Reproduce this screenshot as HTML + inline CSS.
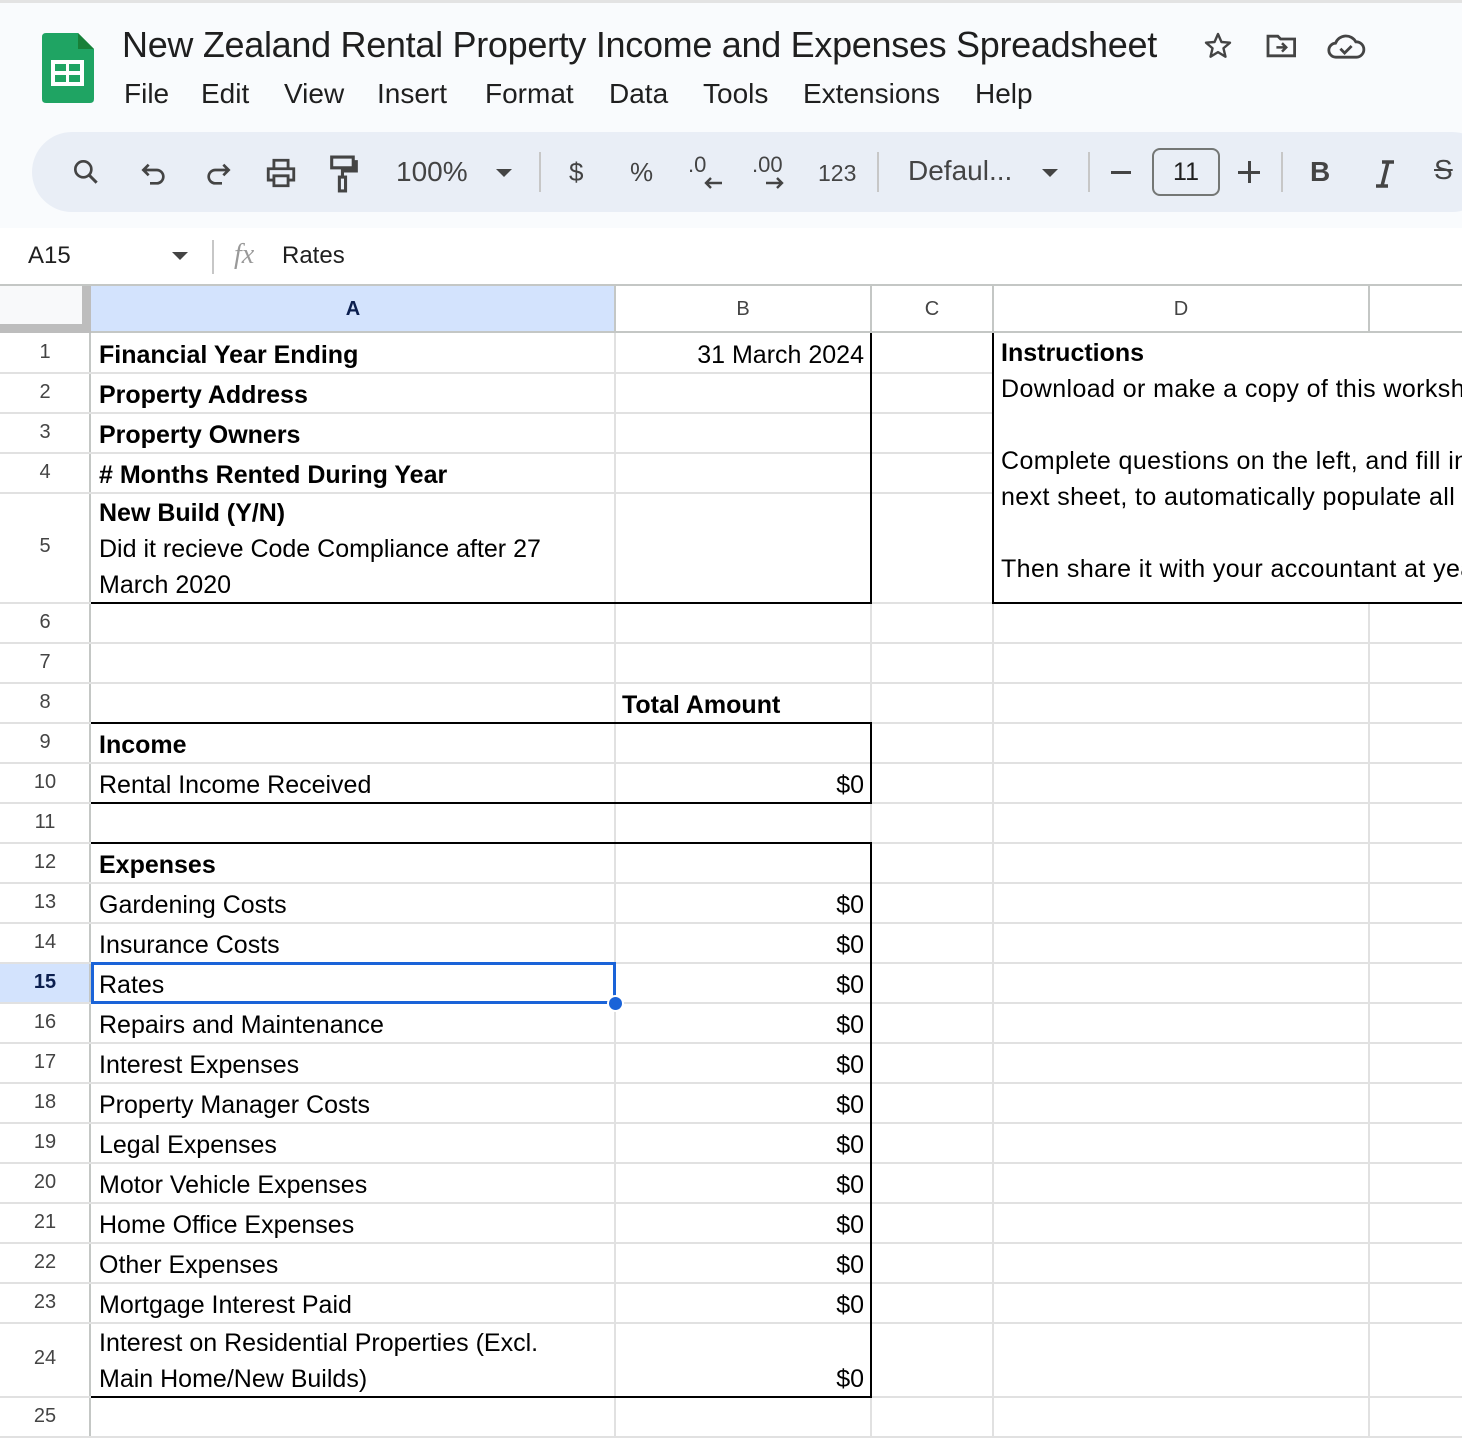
<!DOCTYPE html>
<html><head><meta charset="utf-8"><style>
*{margin:0;padding:0;box-sizing:border-box}
body{width:1462px;height:1438px;overflow:hidden;background:#fff;font-family:"Liberation Sans",sans-serif;position:relative;color:#000}
.a{position:absolute}
.t{position:absolute;font-size:25px;line-height:30px;white-space:nowrap}
.b{font-weight:bold}
.rn{position:absolute;left:0;width:90px;text-align:center;font-size:20px;color:#444}
.h{position:absolute;height:2px;background:#e1e1e1}
.v{position:absolute;width:2px;background:#e1e1e1}
.k{position:absolute;background:#000}
.m{position:absolute;top:77px;font-size:28px;line-height:34px;color:#1f1f1f;white-space:nowrap}
.ic{position:absolute;top:152px}
</style></head><body>
<div class="a" style="left:0;top:0;width:1462px;height:228px;background:#f9fbfd"></div>
<div class="a" style="left:0;top:0;width:1462px;height:3px;background:#e3e3e3"></div>
<svg class="a" style="left:42px;top:33px" width="52" height="70" viewBox="0 0 52 70">
<path d="M4 0H36L52 16V66Q52 70 48 70H4Q0 70 0 66V4Q0 0 4 0Z" fill="#1fa463"/>
<path d="M36 0V16H52Z" fill="#188038"/>
<rect x="9" y="27" width="33" height="26" fill="#fff"/>
<rect x="13" y="31" width="11" height="7" fill="#1fa463"/><rect x="27" y="31" width="11" height="7" fill="#1fa463"/>
<rect x="13" y="42" width="11" height="7" fill="#1fa463"/><rect x="27" y="42" width="11" height="7" fill="#1fa463"/>
</svg>
<div class="t" style="left:122px;top:24px;font-size:36px;line-height:42px;color:#1f1f1f;letter-spacing:-0.3px">New Zealand Rental Property Income and Expenses Spreadsheet</div>
<svg class="a" style="left:1202px;top:30px" width="32" height="32" viewBox="0 0 24 24"><path d="M12 3l2.6 6 6.4.5-4.9 4.2 1.5 6.3L12 16.6 6.4 20l1.5-6.3L3 9.5l6.4-.5z" fill="none" stroke="#444" stroke-width="1.8" stroke-linejoin="round"/></svg>
<svg class="a" style="left:1265px;top:32px" width="34" height="28" viewBox="0 0 24 20"><path d="M2 3h7l2 2h10v12H2z" fill="none" stroke="#444" stroke-width="2"/><path d="M8 11h7M12 8l3 3-3 3" fill="none" stroke="#444" stroke-width="1.8"/></svg>
<svg class="a" style="left:1326px;top:32px" width="40" height="28" viewBox="0 0 28 20"><path d="M7 18a5 5 0 0 1-.5-10A8 8 0 0 1 21 7a5.5 5.5 0 0 1 .5 11z" fill="none" stroke="#444" stroke-width="2"/><path d="M10 12l3 3 5-5" fill="none" stroke="#444" stroke-width="2"/></svg>
<div class="m" style="left:124px">File</div>
<div class="m" style="left:201px">Edit</div>
<div class="m" style="left:284px">View</div>
<div class="m" style="left:377px">Insert</div>
<div class="m" style="left:485px">Format</div>
<div class="m" style="left:609px">Data</div>
<div class="m" style="left:703px">Tools</div>
<div class="m" style="left:803px">Extensions</div>
<div class="m" style="left:975px">Help</div>
<div class="a" style="left:32px;top:132px;width:1460px;height:80px;background:#e9eef6;border-radius:40px"></div>
<svg class="ic" style="left:70px;top:156px" width="32" height="32" viewBox="0 0 24 24"><circle cx="10" cy="10" r="6" fill="none" stroke="#444" stroke-width="2"/><path d="M14.5 14.5L20 20" stroke="#444" stroke-width="2.2"/></svg>
<svg class="ic" style="left:138px;top:158px" width="32" height="32" viewBox="0 0 24 24"><path d="M8 5L4 9l4 4M4 9h10a5 5 0 0 1 0 10H9" fill="none" stroke="#444" stroke-width="2"/></svg>
<svg class="ic" style="left:202px;top:158px" width="32" height="32" viewBox="0 0 24 24"><path d="M16 5l4 4-4 4M20 9H10a5 5 0 0 0 0 10h5" fill="none" stroke="#444" stroke-width="2"/></svg>
<svg class="ic" style="left:264px;top:156px" width="34" height="34" viewBox="0 0 24 24"><path d="M7 8V3h10v5M7 17H3V9h18v8h-4M7 14h10v7H7z" fill="none" stroke="#444" stroke-width="2"/></svg>
<svg class="ic" style="left:328px;top:154px" width="32" height="40" viewBox="0 0 20 26"><path d="M2 2h14v7H2zM16 5h2v6H9v4" fill="none" stroke="#444" stroke-width="2"/><rect x="7" y="15" width="4" height="9" fill="none" stroke="#444" stroke-width="2"/></svg>
<div class="t" style="left:396px;top:157px;font-size:28px;color:#444">100%</div>
<div class="a" style="left:496px;top:169px;border:8px solid transparent;border-top:8px solid #444;border-bottom:0"></div>
<div class="a" style="left:539px;top:152px;width:2px;height:40px;background:#c7c7c7"></div>
<div class="t" style="left:569px;top:157px;font-size:26px;color:#444">$</div>
<div class="t" style="left:630px;top:157px;font-size:26px;color:#444">%</div>
<div class="t" style="left:688px;top:150px;font-size:22px;color:#444">.0</div>
<svg class="a" style="left:702px;top:176px" width="22" height="14" viewBox="0 0 22 14"><path d="M20 7H4M9 2L4 7l5 5" fill="none" stroke="#444" stroke-width="2.4"/></svg>
<div class="t" style="left:752px;top:150px;font-size:22px;color:#444">.00</div>
<svg class="a" style="left:764px;top:176px" width="22" height="14" viewBox="0 0 22 14"><path d="M2 7h16M13 2l5 5-5 5" fill="none" stroke="#444" stroke-width="2.4"/></svg>
<div class="t" style="left:818px;top:158px;font-size:23px;color:#444">123</div>
<div class="a" style="left:877px;top:152px;width:2px;height:40px;background:#c7c7c7"></div>
<div class="t" style="left:908px;top:156px;font-size:28px;color:#444">Defaul...</div>
<div class="a" style="left:1042px;top:169px;border:8px solid transparent;border-top:8px solid #444;border-bottom:0"></div>
<div class="a" style="left:1088px;top:152px;width:2px;height:40px;background:#c7c7c7"></div>
<div class="a" style="left:1111px;top:171px;width:20px;height:3px;background:#444"></div>
<div class="a" style="left:1152px;top:148px;width:68px;height:48px;border:2px solid #747775;border-radius:8px;font-size:25px;line-height:44px;text-align:center;color:#1f1f1f">11</div>
<div class="a" style="left:1238px;top:171px;width:22px;height:3px;background:#444"></div>
<div class="a" style="left:1248px;top:161px;width:3px;height:22px;background:#444"></div>
<div class="a" style="left:1281px;top:152px;width:2px;height:40px;background:#c7c7c7"></div>
<div class="t b" style="left:1310px;top:157px;font-size:28px;color:#444">B</div>
<svg class="a" style="left:1372px;top:160px" width="26" height="28" viewBox="0 0 26 28"><path d="M10 2h12M4 26h12M16 2L10 26" fill="none" stroke="#444" stroke-width="3.5"/></svg>
<div class="t" style="left:1434px;top:155px;font-size:28px;color:#444;text-decoration:line-through">S</div>
<div class="t" style="left:28px;top:241px;font-size:24px;color:#1f1f1f">A15</div>
<div class="a" style="left:172px;top:252px;border:8px solid transparent;border-top:8px solid #444;border-bottom:0"></div>
<div class="a" style="left:212px;top:240px;width:2px;height:34px;background:#c7c7c7"></div>
<div class="t" style="left:234px;top:240px;font-size:28px;color:#999;font-style:italic;font-family:'Liberation Serif',serif">fx</div>
<div class="t" style="left:282px;top:241px;font-size:24px;color:#1f1f1f">Rates</div>
<div class="a" style="left:0;top:284px;width:1462px;height:2px;background:#c4c7c5"></div>
<div class="a" style="left:0;top:286px;width:82px;height:40px;background:#f8f9fa"></div>
<div class="a" style="left:82px;top:286px;width:9px;height:47px;background:#bdbdbd"></div>
<div class="a" style="left:0;top:324px;width:91px;height:9px;background:#bdbdbd"></div>
<div class="a" style="left:91px;top:286px;width:524px;height:46px;background:#d3e3fd"></div>
<div class="a" style="left:91px;top:331px;width:1371px;height:2px;background:#c4c7c5"></div>
<div class="a" style="left:614px;top:286px;width:2px;height:46px;background:#c4c7c5"></div>
<div class="a" style="left:870px;top:286px;width:2px;height:46px;background:#c4c7c5"></div>
<div class="a" style="left:992px;top:286px;width:2px;height:46px;background:#c4c7c5"></div>
<div class="a" style="left:1368px;top:286px;width:2px;height:46px;background:#c4c7c5"></div>
<div class="t b" style="left:91px;width:524px;text-align:center;top:294px;font-size:20px;color:#0b1f4f">A</div>
<div class="t" style="left:615px;width:256px;text-align:center;top:294px;font-size:20px;color:#444">B</div>
<div class="t" style="left:871px;width:122px;text-align:center;top:294px;font-size:20px;color:#444">C</div>
<div class="t" style="left:993px;width:376px;text-align:center;top:294px;font-size:20px;color:#444">D</div>
<div class="a" style="left:0;top:963px;width:89px;height:40px;background:#d3e3fd"></div>
<div class="a" style="left:89px;top:333px;width:2px;height:1105px;background:#c4c7c5"></div>
<div class="v" style="left:614px;top:333px;height:1105px"></div>
<div class="v" style="left:870px;top:333px;height:1105px"></div>
<div class="v" style="left:992px;top:333px;height:1105px"></div>
<div class="v" style="left:1368px;top:603px;height:835px"></div>
<div class="h" style="left:0;top:372px;width:993px"></div>
<div class="h" style="left:0;top:412px;width:993px"></div>
<div class="h" style="left:0;top:452px;width:993px"></div>
<div class="h" style="left:0;top:492px;width:993px"></div>
<div class="h" style="left:0;top:602px;width:1462px"></div>
<div class="h" style="left:0;top:642px;width:1462px"></div>
<div class="h" style="left:0;top:682px;width:1462px"></div>
<div class="h" style="left:0;top:722px;width:1462px"></div>
<div class="h" style="left:0;top:762px;width:1462px"></div>
<div class="h" style="left:0;top:802px;width:1462px"></div>
<div class="h" style="left:0;top:842px;width:1462px"></div>
<div class="h" style="left:0;top:882px;width:1462px"></div>
<div class="h" style="left:0;top:922px;width:1462px"></div>
<div class="h" style="left:0;top:962px;width:1462px"></div>
<div class="h" style="left:0;top:1002px;width:1462px"></div>
<div class="h" style="left:0;top:1042px;width:1462px"></div>
<div class="h" style="left:0;top:1082px;width:1462px"></div>
<div class="h" style="left:0;top:1122px;width:1462px"></div>
<div class="h" style="left:0;top:1162px;width:1462px"></div>
<div class="h" style="left:0;top:1202px;width:1462px"></div>
<div class="h" style="left:0;top:1242px;width:1462px"></div>
<div class="h" style="left:0;top:1282px;width:1462px"></div>
<div class="h" style="left:0;top:1322px;width:1462px"></div>
<div class="h" style="left:0;top:1396px;width:1462px"></div>
<div class="h" style="left:0;top:1436px;width:1462px"></div>
<div class="k" style="left:870px;top:333px;width:2px;height:271px"></div>
<div class="k" style="left:91px;top:602px;width:781px;height:2px"></div>
<div class="k" style="left:992px;top:333px;width:2px;height:271px"></div>
<div class="k" style="left:992px;top:602px;width:470px;height:2px"></div>
<div class="k" style="left:91px;top:722px;width:781px;height:2px"></div>
<div class="k" style="left:91px;top:802px;width:781px;height:2px"></div>
<div class="k" style="left:870px;top:722px;width:2px;height:82px"></div>
<div class="k" style="left:91px;top:842px;width:781px;height:2px"></div>
<div class="k" style="left:91px;top:1396px;width:781px;height:2px"></div>
<div class="k" style="left:870px;top:842px;width:2px;height:556px"></div>
<div class="a" style="left:91px;top:962px;width:525px;height:42px;border:3px solid #1a63d8"></div>
<div class="a" style="left:607px;top:995px;width:17px;height:17px;border-radius:50%;background:#1a63d8;border:2px solid #fff"></div>
<div class="rn" style="top:341px">1</div>
<div class="rn" style="top:381px">2</div>
<div class="rn" style="top:421px">3</div>
<div class="rn" style="top:461px">4</div>
<div class="rn" style="top:535px">5</div>
<div class="rn" style="top:611px">6</div>
<div class="rn" style="top:651px">7</div>
<div class="rn" style="top:691px">8</div>
<div class="rn" style="top:731px">9</div>
<div class="rn" style="top:771px">10</div>
<div class="rn" style="top:811px">11</div>
<div class="rn" style="top:851px">12</div>
<div class="rn" style="top:891px">13</div>
<div class="rn" style="top:931px">14</div>
<div class="rn b" style="top:971px;color:#0b1f4f">15</div>
<div class="rn" style="top:1011px">16</div>
<div class="rn" style="top:1051px">17</div>
<div class="rn" style="top:1091px">18</div>
<div class="rn" style="top:1131px">19</div>
<div class="rn" style="top:1171px">20</div>
<div class="rn" style="top:1211px">21</div>
<div class="rn" style="top:1251px">22</div>
<div class="rn" style="top:1291px">23</div>
<div class="rn" style="top:1347px">24</div>
<div class="rn" style="top:1405px">25</div>
<div class="t b" style="left:99px;top:340px">Financial Year Ending</div>
<div class="t" style="right:598px;top:340px">31 March 2024</div>
<div class="t b" style="left:99px;top:380px">Property Address</div>
<div class="t b" style="left:99px;top:420px">Property Owners</div>
<div class="t b" style="left:99px;top:460px"># Months Rented During Year</div>
<div class="t b" style="left:99px;top:498px">New Build (Y/N)</div>
<div class="t" style="left:99px;top:534px">Did it recieve Code Compliance after 27</div>
<div class="t" style="left:99px;top:570px">March 2020</div>
<div class="t b" style="left:1001px;top:338px">Instructions</div>
<div class="t" style="left:1001px;top:374px;letter-spacing:0.4px">Download or make a copy of this worksheet</div>
<div class="t" style="left:1001px;top:446px;letter-spacing:0.4px">Complete questions on the left, and fill in the</div>
<div class="t" style="left:1001px;top:482px;letter-spacing:0.4px">next sheet, to automatically populate all</div>
<div class="t" style="left:1001px;top:554px;letter-spacing:0.4px">Then share it with your accountant at year end</div>
<div class="t b" style="left:622px;top:690px">Total Amount</div>
<div class="t b" style="left:99px;top:730px">Income</div>
<div class="t" style="left:99px;top:770px">Rental Income Received</div>
<div class="t b" style="left:99px;top:850px">Expenses</div>
<div class="t" style="left:99px;top:890px">Gardening Costs</div>
<div class="t" style="left:99px;top:930px">Insurance Costs</div>
<div class="t" style="left:99px;top:970px">Rates</div>
<div class="t" style="left:99px;top:1010px">Repairs and Maintenance</div>
<div class="t" style="left:99px;top:1050px">Interest Expenses</div>
<div class="t" style="left:99px;top:1090px">Property Manager Costs</div>
<div class="t" style="left:99px;top:1130px">Legal Expenses</div>
<div class="t" style="left:99px;top:1170px">Motor Vehicle Expenses</div>
<div class="t" style="left:99px;top:1210px">Home Office Expenses</div>
<div class="t" style="left:99px;top:1250px">Other Expenses</div>
<div class="t" style="left:99px;top:1290px">Mortgage Interest Paid</div>
<div class="t" style="left:99px;top:1328px">Interest on Residential Properties (Excl.</div>
<div class="t" style="left:99px;top:1364px">Main Home/New Builds)</div>
<div class="t" style="right:598px;top:770px">$0</div>
<div class="t" style="right:598px;top:890px">$0</div>
<div class="t" style="right:598px;top:930px">$0</div>
<div class="t" style="right:598px;top:970px">$0</div>
<div class="t" style="right:598px;top:1010px">$0</div>
<div class="t" style="right:598px;top:1050px">$0</div>
<div class="t" style="right:598px;top:1090px">$0</div>
<div class="t" style="right:598px;top:1130px">$0</div>
<div class="t" style="right:598px;top:1170px">$0</div>
<div class="t" style="right:598px;top:1210px">$0</div>
<div class="t" style="right:598px;top:1250px">$0</div>
<div class="t" style="right:598px;top:1290px">$0</div>
<div class="t" style="right:598px;top:1364px">$0</div>
</body></html>
